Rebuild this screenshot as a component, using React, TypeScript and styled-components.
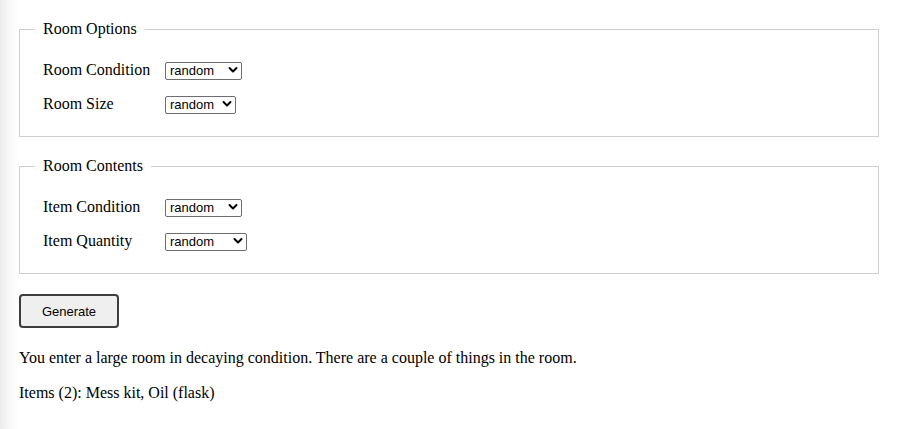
import React from "react";
import styled, { createGlobalStyle } from "styled-components";

const Global = createGlobalStyle`
  html, body { margin: 0; padding: 0; }
  body {
    background: linear-gradient(to right, #ebebeb 0px, #f6f6f6 8px, #ffffff 18px);
    font-family: "Liberation Serif", "Times New Roman", serif;
    font-size: 16px;
    color: #000;
  }
`;

const Page = styled.div`
  padding: 20px 20px 20px 19px;
  display: flex;
  flex-direction: column;
`;

const Group = styled.fieldset`
  margin: 0 0 20px 0;
  padding: 23px 23px 23px 23px;
  border: 1px solid #cfcfcf;
  display: flex;
  flex-direction: column;
  gap: 16px;
`;

const Legend = styled.legend`
  margin-left: -8px;
  padding: 0 8px;
  font-size: 16px;
  line-height: 18px;
`;

const Row = styled.div`
  display: grid;
  grid-template-columns: 122px auto;
  align-items: center;
  height: 18px;
`;

const Label = styled.label`
  font-size: 16px;
  line-height: 18px;
`;

const SelectWrap = styled.div<{ $w: number }>`
  position: relative;
  width: ${(p) => p.$w}px;
  height: 18px;
`;

const Select = styled.select`
  appearance: none;
  -webkit-appearance: none;
  width: 100%;
  height: 18px;
  box-sizing: border-box;
  margin: 0;
  padding: 0 0 0 4px;
  border: 1px solid #6e6e6e;
  border-radius: 2px;
  background: #fff;
  font-family: "Liberation Sans", Arial, sans-serif;
  font-size: 13px;
  line-height: 16px;
  color: #000;
`;

const Chevron = styled.svg`
  position: absolute;
  right: 4px;
  top: 5px;
  width: 10px;
  height: 8px;
  pointer-events: none;
`;

const Button = styled.button`
  width: 100px;
  height: 34px;
  box-sizing: border-box;
  margin: 0 0 21px 0;
  border: 2px solid #3d3d3d;
  border-radius: 4px;
  background: #efefef;
  font-family: "Liberation Sans", Arial, sans-serif;
  font-size: 13px;
  color: #000;
  padding: 0;
  align-self: flex-start;
`;

const Para = styled.p`
  margin: 0 0 17px 0;
  font-size: 16px;
  line-height: 18px;
`;

type Opt = { label: string; w: number };

const Field: React.FC<Opt> = ({ label, w }) => (
  <Row>
    <Label>{label}</Label>
    <SelectWrap $w={w}>
      <Select defaultValue="random">
        <option value="random">random</option>
      </Select>
      <Chevron viewBox="0 0 10 8">
        <path d="M1.5 2 L5 5.5 L8.5 2" fill="none" stroke="#000" strokeWidth="2" strokeLinecap="round" strokeLinejoin="round" />
      </Chevron>
    </SelectWrap>
  </Row>
);

export default function App() {
  return (
    <>
      <Global />
      <Page>
        <Group>
          <Legend>Room Options</Legend>
          <Field label="Room Condition" w={77} />
          <Field label="Room Size" w={71} />
        </Group>
        <Group>
          <Legend>Room Contents</Legend>
          <Field label="Item Condition" w={77} />
          <Field label="Item Quantity" w={82} />
        </Group>
        <Button>Generate</Button>
        <Para>You enter a large room in decaying condition. There are a couple of things in the room.</Para>
        <Para>Items (2): Mess kit, Oil (flask)</Para>
      </Page>
    </>
  );
}
